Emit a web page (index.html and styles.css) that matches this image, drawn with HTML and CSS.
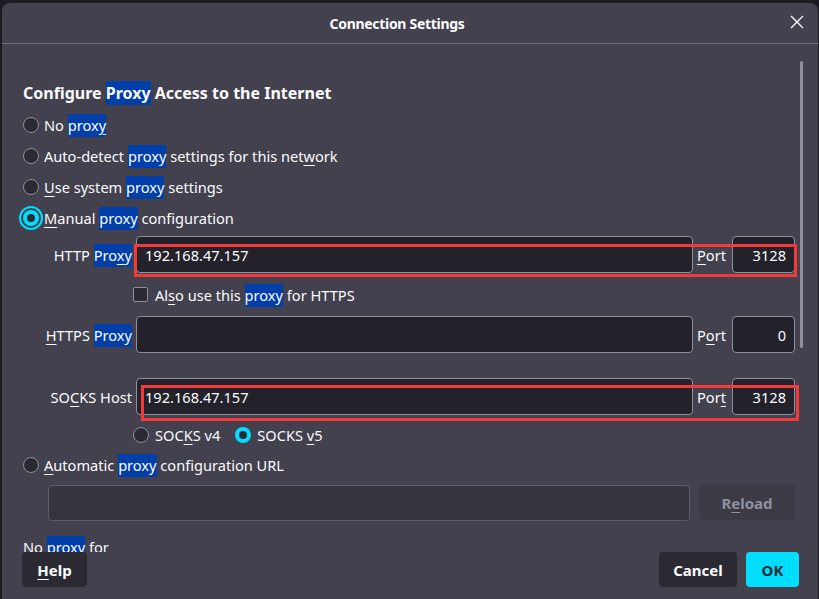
FILE: index.html
```html
<!DOCTYPE html>
<html>
<head>
<meta charset="utf-8">
<link rel="stylesheet" href="styles.css">
</head>
<body>
<div class="dialog">
  <div class="header">
    <div class="title">Connection Settings</div>
    <svg class="close" width="14" height="14" viewBox="0 0 14 14"><path d="M1 1L13 13M13 1L1 13" stroke="#fbfbfe" stroke-width="1.4" fill="none"/></svg>
  </div>
  <div class="content">
    <div class="scrollbar"></div>
    <h1 class="heading">Configure <span class="hl">Proxy</span> Access to the Internet</h1>
    <div class="radio-row"><span class="radio"></span><span>No <span class="hl">prox<u>y</u></span></span></div>
    <div class="radio-row"><span class="radio"></span><span>Auto-detect <span class="hl">proxy</span> settings for this net<u>w</u>ork</span></div>
    <div class="radio-row"><span class="radio"></span><span><u>U</u>se system <span class="hl">proxy</span> settings</span></div>
    <div class="radio-row"><span class="radio checked focus"></span><span><u>M</u>anual <span class="hl">proxy</span> configuration</span></div>

    <div class="field-row first">
      <label class="flabel">HTTP <span class="hl">Pro<u>x</u>y</span></label>
      <div class="input">192.168.47.157</div>
      <label class="plabel"><u>P</u>ort</label>
      <div class="input port">3128</div>
      <div class="redbox red1"></div>
    </div>
    <div class="check-row"><span class="checkbox"></span><span>Al<u>s</u>o use this <span class="hl">proxy</span> for HTTPS</span></div>
    <div class="field-row">
      <label class="flabel"><u>H</u>TTPS <span class="hl">Proxy</span></label>
      <div class="input"></div>
      <label class="plabel">P<u>o</u>rt</label>
      <div class="input port">0</div>
    </div>
    <div class="field-row socks">
      <label class="flabel">SO<u>C</u>KS Host</label>
      <div class="input">192.168.47.157</div>
      <label class="plabel">Por<u>t</u></label>
      <div class="input port">3128</div>
      <div class="redbox red2"></div>
    </div>
    <div class="socks-ver">
      <span class="radio"></span><span class="sv">SOC<u>K</u>S v4</span>
      <span class="radio checked"></span><span>SOCKS <u>v</u>5</span>
    </div>
    <div class="radio-row auto"><span class="radio"></span><span><u>A</u>utomatic <span class="hl">proxy</span> configuration URL</span></div>
    <div class="url-row">
      <div class="input url"></div>
      <div class="btn reload">R<u>e</u>load</div>
    </div>
    <div class="noproxy">No <span class="hl">proxy</span> for</div>
  </div>
  <div class="footer">
    <div class="btn help"><u>H</u>elp</div>
    <div class="spacer"></div>
    <div class="btn cancel">Cancel</div>
    <div class="btn ok">OK</div>
  </div>
</div>
</body>
</html>
```
FILE: styles.css
```css
* { box-sizing: border-box; }
html, body { margin: 0; padding: 0; }
body {
  background: #1c1b22;
  width: 819px;
  height: 599px;
  overflow: hidden;
  font-family: "Noto Sans", "Open Sans", sans-serif;
  color: #fbfbfe;
  font-size: 14.6px;
}
.dialog {
  margin: 3px 0 0 2px;
  width: 816px;
  height: 600px;
  background: #42414d;
  border-radius: 8px 8px 0 0;
  display: flex;
  flex-direction: column;
}
.header {
  height: 41px;
  border-bottom: 1px solid #6e6d78;
  display: flex;
  align-items: center;
  justify-content: center;
  position: relative;
  flex: none;
}
.title {
  font-size: 14px;
  font-weight: 700;
  letter-spacing: -0.3px;
  margin-right: 26px;
}
.close {
  position: absolute;
  right: 14px;
  top: 12px;
}
.content {
  height: 508px;
  overflow: hidden;
  padding-left: 21px;
  position: relative;
  flex: none;
}
.scrollbar {
  position: absolute;
  left: 798px;
  top: 17px;
  width: 3px;
  height: 287px;
  background: #8f8f9d;
  border-radius: 2px;
}
.heading {
  margin: 38px 0 5px 0;
  font-size: 16px;
  font-weight: 700;
  line-height: 22px;
}
.hl {
  background: #003eaa;
  padding: 1px 0 2px;
}
.heading .hl { padding: 1px 0 1px; }
u { text-decoration-thickness: 1px; text-underline-offset: 3px; }
.radio-row {
  height: 31px;
  display: flex;
  align-items: center;
  gap: 5px;
}
.radio {
  width: 16px;
  height: 16px;
  border-radius: 50%;
  border: 1px solid #8f8f9d;
  background: #2b2a33;
  flex: none;
  position: relative;
}
.radio.checked {
  border: none;
  background: #00ddff;
}
.radio.checked::after {
  content: "";
  position: absolute;
  left: 4px;
  top: 4px;
  width: 8px;
  height: 8px;
  border-radius: 50%;
  background: #2b2a33;
}
.radio.focus {
  outline: 2px solid #00ddff;
  outline-offset: 2px;
}
.field-row {
  display: flex;
  align-items: center;
  height: 37px;
  position: relative;
}
.field-row.first { margin-top: 3px; }
.field-row.socks { margin-top: 25px; }
.flabel {
  width: 109px;
  text-align: right;
  margin-right: 4px;
  white-space: nowrap;
}
.input {
  width: 557px;
  height: 37px;
  background: #23222b;
  border: 1px solid #8f8f9d;
  border-radius: 4px;
  padding: 0 8px;
  display: flex;
  align-items: center;
  white-space: nowrap;
}
.plabel {
  width: 39px;
  padding-left: 4px;
}
.input.port {
  width: 63px;
  justify-content: flex-end;
}
.redbox {
  position: absolute;
  border: 3px solid #f23a3a;
  pointer-events: none;
}
.red1 { left: 111px; top: 8px; width: 663px; height: 33px; }
.red2 { left: 118px; top: 7px; width: 658px; height: 36px; }
.check-row {
  height: 43px;
  display: flex;
  align-items: center;
  padding-left: 110px;
  gap: 7px;
}
.checkbox {
  width: 15px;
  height: 15px;
  border: 1px solid #8f8f9d;
  background: #2b2a33;
  border-radius: 2px;
}
.socks-ver {
  margin-top: 5px;
  height: 30px;
  display: flex;
  align-items: center;
  padding-left: 110px;
  gap: 6px;
}
.socks-ver .sv { margin-right: 9px; }
.radio-row.auto { height: 30px; }
.url-row {
  margin-top: 5px;
  display: flex;
  gap: 9px;
  padding-left: 25px;
}
.input.url {
  width: 642px;
  height: 36px;
  background: #35343f;
  border-color: #5e5d67;
}
.btn {
  height: 35px;
  border-radius: 4px;
  display: flex;
  align-items: center;
  justify-content: center;
  font-weight: 700;
  font-size: 15px;
}
.reload {
  width: 96px;
  background: #3b3a45;
  color: #8f8f9d;
}
.noproxy {
  margin-top: 16px;
  line-height: 20px;
}
.footer {
  display: flex;
  padding: 0 19px 0 20px;
  gap: 9px;
  flex: none;
}
.spacer { flex: 1; }
.help { width: 65px; background: #2b2a33; }
.cancel { width: 78px; background: #2b2a33; }
.ok { width: 53px; background: #00ddff; color: #2b2a33; }
```
